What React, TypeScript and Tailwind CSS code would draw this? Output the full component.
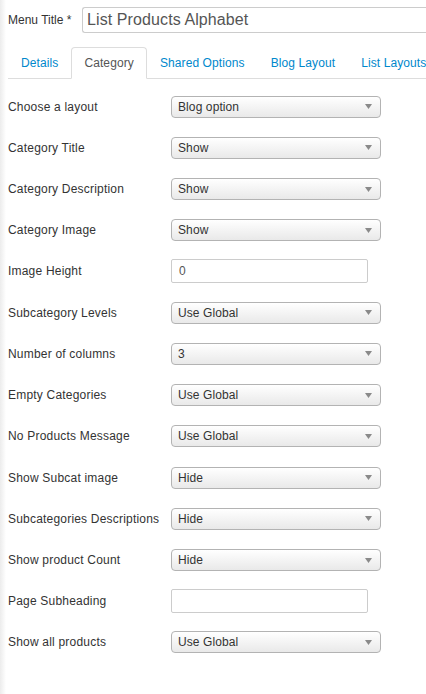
const rows: { label: string; value: string; kind: "select" | "input" }[] = [
  { label: "Choose a layout", value: "Blog option", kind: "select" },
  { label: "Category Title", value: "Show", kind: "select" },
  { label: "Category Description", value: "Show", kind: "select" },
  { label: "Category Image", value: "Show", kind: "select" },
  { label: "Image Height", value: "0", kind: "input" },
  { label: "Subcategory Levels", value: "Use Global", kind: "select" },
  { label: "Number of columns", value: "3", kind: "select" },
  { label: "Empty Categories", value: "Use Global", kind: "select" },
  { label: "No Products Message", value: "Use Global", kind: "select" },
  { label: "Show Subcat image", value: "Hide", kind: "select" },
  { label: "Subcategories Descriptions", value: "Hide", kind: "select" },
  { label: "Show product Count", value: "Hide", kind: "select" },
  { label: "Page Subheading", value: "", kind: "input" },
  { label: "Show all products", value: "Use Global", kind: "select" },
];

const tabs = ["Details", "Category", "Shared Options", "Blog Layout", "List Layouts"];

function Select({ value }: { value: string }) {
  return (
    <div className="flex items-center justify-between w-[210px] h-[22px] border border-[#b3b3b3] rounded-[4px] bg-gradient-to-b from-white to-[#e9e9e9] pl-[6px] pr-[8px] text-[12px] text-[#333] tracking-[0.1px]">
      <span>{value}</span>
      {/* arrow */}
      <svg width="7" height="5" viewBox="0 0 7 5">
        <path d="M0 0 L7 0 L3.5 5 Z" fill="#8a8a8a" />
      </svg>
    </div>
  );
}

function TextInput({ value }: { value: string }) {
  return (
    <div className="flex items-center w-[197px] h-[24px] border border-[#ccc] rounded-[2px] bg-white px-[7px] text-[12px] text-[#555]">
      {value}
    </div>
  );
}

export default function App() {
  return (
    <div className="relative w-[426px] h-[694px] bg-white overflow-hidden font-['Liberation_Sans',Arial,sans-serif]">

      {/* left shade */}
      <div className="absolute left-0 top-0 bottom-0 w-[6px] bg-gradient-to-r from-[#ececec] to-white" />

      <div className="relative pl-[8px]">

        {/* MENU TITLE */}
        <div className="flex items-center pt-[7px]">
          <span className="text-[12px] text-[#333] w-[74px]">Menu Title *</span>
          <div className="flex items-center h-[26px] flex-1 border border-[#ccc] border-r-0 rounded-l-[3px] pl-[4px] text-[16px] text-[#555] tracking-[0.1px]">
            List Products Alphabet
          </div>
        </div>

        {/* TABS */}
        <div className="flex mt-[14px] border-b border-[#ddd] h-[32px] whitespace-nowrap">
          {tabs.map((t) =>
            t === "Category" ? (
              <div
                key={t}
                className="flex items-center px-[12px] h-[32px] border border-[#ddd] border-b-white rounded-t-[4px] bg-white text-[12px] tracking-[0.1px] text-[#555] mb-[-1px]"
              >
                {t}
              </div>
            ) : (
              <div
                key={t}
                className="flex items-center px-[12px] h-[32px] text-[12px] tracking-[0.1px] text-[#0088cc] border border-transparent"
              >
                {t}
              </div>
            )
          )}
        </div>

        {/* FIELDS */}
        <div className="mt-[7px]">
          {rows.map((r) => (
            <div key={r.label} className="flex items-center h-[41.23px]">
              <span className="w-[163px] text-[12px] tracking-[0.2px] text-[#333]">{r.label}</span>
              {r.kind === "select" ? <Select value={r.value} /> : <TextInput value={r.value} />}
            </div>
          ))}
        </div>

      </div>
    </div>
  );
}
